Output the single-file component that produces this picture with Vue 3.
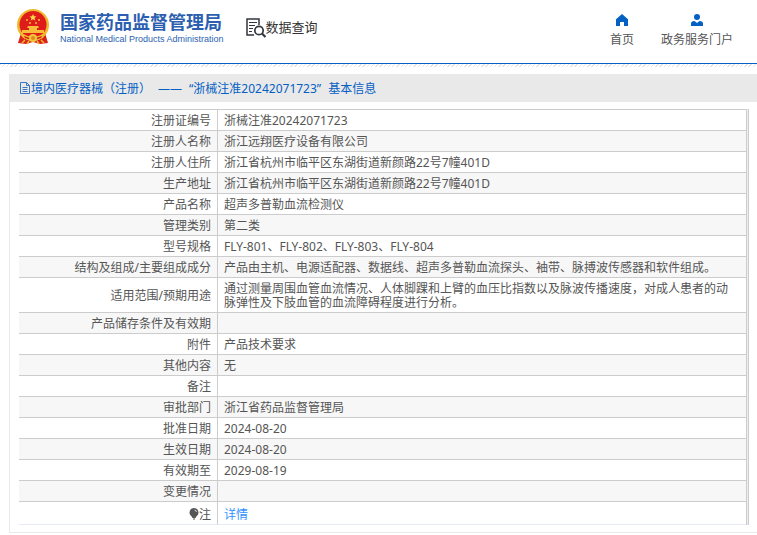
<script setup>
const rows = [
  { label: '注册证编号', value: '浙械注准20242071723' },
  { label: '注册人名称', value: '浙江远翔医疗设备有限公司' },
  { label: '注册人住所', value: '浙江省杭州市临平区东湖街道新颜路22号7幢401D' },
  { label: '生产地址', value: '浙江省杭州市临平区东湖街道新颜路22号7幢401D' },
  { label: '产品名称', value: '超声多普勒血流检测仪' },
  { label: '管理类别', value: '第二类' },
  { label: '型号规格', value: 'FLY-801、FLY-802、FLY-803、FLY-804' },
  { label: '结构及组成/主要组成成分', value: '产品由主机、电源适配器、数据线、超声多普勒血流探头、袖带、脉搏波传感器和软件组成。' },
  { label: '适用范围/预期用途', value: '通过测量周围血管血流情况、人体脚踝和上臂的血压比指数以及脉波传播速度，对成人患者的动脉弹性及下肢血管的血流障碍程度进行分析。' },
  { label: '产品储存条件及有效期', value: '' },
  { label: '附件', value: '产品技术要求' },
  { label: '其他内容', value: '无' },
  { label: '备注', value: '' },
  { label: '审批部门', value: '浙江省药品监督管理局' },
  { label: '批准日期', value: '2024-08-20' },
  { label: '生效日期', value: '2024-08-20' },
  { label: '有效期至', value: '2029-08-19' },
  { label: '变更情况', value: '' },
]
</script>

<template>
  <div class="page">
    <header class="header">
      <a class="brand" href="#">
        <svg class="emblem" viewBox="0 0 34 36" aria-hidden="true">
          <path d="M5 24 L2 34 L10 35 L17 33 L24 35 L32 34 L29 24Z" fill="#d9231c" />
          <circle cx="17" cy="16" r="16" fill="#f0b92f" />
          <circle cx="17" cy="15.500" r="13.500" fill="#de1c1a" />
          <path d="M17 5l1 2.300 2.500.2-1.900 1.600.6 2.400L17 10.200l-2.200 1.300.6-2.400-1.900-1.600 2.500-.2z" fill="#ffd84a" />
          <g fill="#f9bd3a">
            <circle cx="11" cy="11" r="1" /><circle cx="23" cy="11" r="1" />
            <circle cx="14" cy="14" r="1" /><circle cx="20" cy="14" r="1" />
            <path d="M12 17h10l1 2H11zM13 19h8v2h-8zM6 21h22v3H6z" />
          </g>
          <path d="M5 24q12 7 24 0l-2 5q-10 5-20 0z" fill="#f0b92f" />
          <path d="M8 27q9 4 18 0l-1 2q-8 3-16 0z" fill="#d9231c" />
          <circle cx="17" cy="29" r="4" fill="#f4c63e" />
          <circle cx="17" cy="29" r="2" fill="#dd8c20" />
          <path d="M9 31l-3 3M25 31l3 3M13 32l-2 3M21 32l2 3" stroke="#f0b92f" stroke-width="1.500" />
        </svg>
        <span class="brand-text">
          <span class="brand-cn">国家药品监督管理局</span>
          <span class="brand-en">National Medical Products Administration</span>
        </span>
      </a>
      <a class="query" href="#">
        <svg class="query-icon" viewBox="0 0 20 20" fill="none" stroke="#33363f" aria-hidden="true">
          <path d="M8 17H1V1h12v6" stroke-width="1.500" />
          <path d="M3 4.500h8M3 7.500h6M3 10.500h4M3 13.500h3" stroke-width="1.200" />
          <circle cx="13" cy="12.500" r="4.200" stroke-width="1.700" />
          <path d="M16 15.500l3.500 3.500" stroke-width="2.200" />
        </svg>
        <span>数据查询</span>
      </a>
      <nav class="nav">
        <a href="#">
          <svg viewBox="0 0 12 12" aria-hidden="true"><path d="M6 0L0 5.200V12h4V8h4v4h4V5.200z" fill="#0560c4" /></svg>
          <span>首页</span>
        </a>
        <a href="#">
          <svg viewBox="0 0 12 12" aria-hidden="true">
            <circle cx="6" cy="3" r="3" fill="#0560c4" />
            <path d="M0 12V9.500Q0 7 3.500 7L6 9 8.500 7Q12 7 12 9.500V12z" fill="#0560c4" />
          </svg>
          <span>政务服务门户</span>
        </a>
      </nav>
    </header>
    <div class="hatch"></div>

    <main class="panel">
      <h1 class="title">
        <svg class="doc" viewBox="0 0 12 12" fill="none" stroke="#3a76c4" aria-hidden="true">
          <path d="M1.500.5h6l3 3v8h-9zM7.500.5v3h3M3.500 5.500h5M3.500 7.500h5M3.500 9.500h5" />
        </svg>
        <span class="title-parts">
          <span>境内医疗器械（注册）</span>
          <span>——</span>
          <span>“浙械注准20242071723”</span>
          <span>基本信息</span>
        </span>
      </h1>
      <div class="body">
        <div class="frame">
          <table class="info">
            <tbody>
              <tr v-for="row in rows" :key="row.label">
                <th scope="row">{{ row.label }}</th>
                <td>{{ row.value }}</td>
              </tr>
              <tr class="note">
                <th scope="row">
                  <svg class="bulb" viewBox="0 0 10 12" aria-hidden="true">
                    <path d="M5 0a4.500 4.500 0 0 1 2.500 8.200L6.500 10h-3L2.500 8.200A4.500 4.500 0 0 1 5 0zM4 10.500h2v1H4z" fill="#555" />
                    <path d="M5.500 2q1.800.2 2 2" stroke="#ddd" fill="none" />
                  </svg>注
                </th>
                <td><a href="#">详情</a></td>
              </tr>
            </tbody>
          </table>
        </div>
      </div>
    </main>
  </div>
</template>

<style>
body {
  margin: 0;
  background: #fff;
}
</style>

<style scoped>
.page {
  font-family: "Noto Sans", "Noto Sans CJK SC", sans-serif;
  font-size: 12px;
  line-height: 14px;
  color: #555;
}
a {
  text-decoration: none;
  color: inherit;
}
svg {
  flex: none;
}
.header {
  display: flex;
  align-items: flex-start;
  height: 63px;
  padding: 0 24px 0 16px;
  border-bottom: 1px solid #0560c4;
}
.brand {
  display: flex;
  gap: 10px;
  padding-top: 9px;
  color: #2c5fb0;
}
.emblem {
  width: 34px;
  height: 36px;
}
.brand-text {
  display: flex;
  flex-direction: column;
  padding-top: 4px;
  white-space: nowrap;
}
.brand-cn {
  font-size: 18px;
  line-height: 19px;
  font-weight: 700;
}
.brand-en {
  font-family: "Liberation Sans", sans-serif;
  font-size: 9px;
  line-height: 14px;
}
.query {
  display: flex;
  align-items: flex-start;
  padding-top: 18px;
  margin-left: 22px;
  font-size: 13px;
  line-height: 18px;
  color: #333;
  white-space: nowrap;
}
.query-icon {
  width: 20px;
  height: 20px;
}
.nav {
  display: flex;
  gap: 27px;
  margin-left: auto;
  padding-top: 14px;
}
.nav a {
  display: flex;
  flex-direction: column;
  align-items: center;
  gap: 7px;
  white-space: nowrap;
}
.nav svg {
  width: 12px;
  height: 12px;
}
.hatch {
  height: 3px;
  background: repeating-linear-gradient(135deg, #e4e4e4 0 1px, #fff 1px 3px);
}
.panel {
  margin: 7px 0 0 9px;
  border-left: 1px solid #e9e9e9;
  border-bottom: 1px solid #e9e9e9;
}
.title {
  display: flex;
  align-items: center;
  height: 28px;
  margin: 0;
  padding-left: 9px;
  background: #e9e9e9;
  font-size: 12px;
  line-height: 16px;
  font-weight: 400;
  color: #0560c4;
  white-space: nowrap;
}
.title-parts {
  display: flex;
  gap: 7px;
  padding-top: 2px;
}
.doc {
  width: 12px;
  height: 12px;
}
.body {
  padding: 7px 8px 7px 9px;
}
.frame {
  padding-right: 1px;
  border-right: 1px solid #ccc;
  background: #eee;
}
.info {
  width: 100%;
  border-spacing: 0;
  border-top: 1px solid #ccc;
  border-right: 1px solid #ccc;
  background: #fff;
}
.info th,
.info td {
  height: 14px;
  padding: 4px 6px 2px;
  border-bottom: 1px solid #ccc;
  font-weight: 400;
}
.info th {
  width: 186px;
  border-right: 1px solid #ccc;
  text-align: right;
}
.info td {
  padding-right: 16px;
}
.info tr:nth-child(even) {
  background: #f7f7f7;
}
.info .note th,
.info .note td {
  height: 15px;
  padding-top: 5px;
  border-bottom-color: #e6eaf5;
}
.info .note {
  background: #fff;
}
.bulb {
  width: 10px;
  height: 12px;
  vertical-align: -1px;
}
.info a {
  color: #3391ff;
}
</style>
